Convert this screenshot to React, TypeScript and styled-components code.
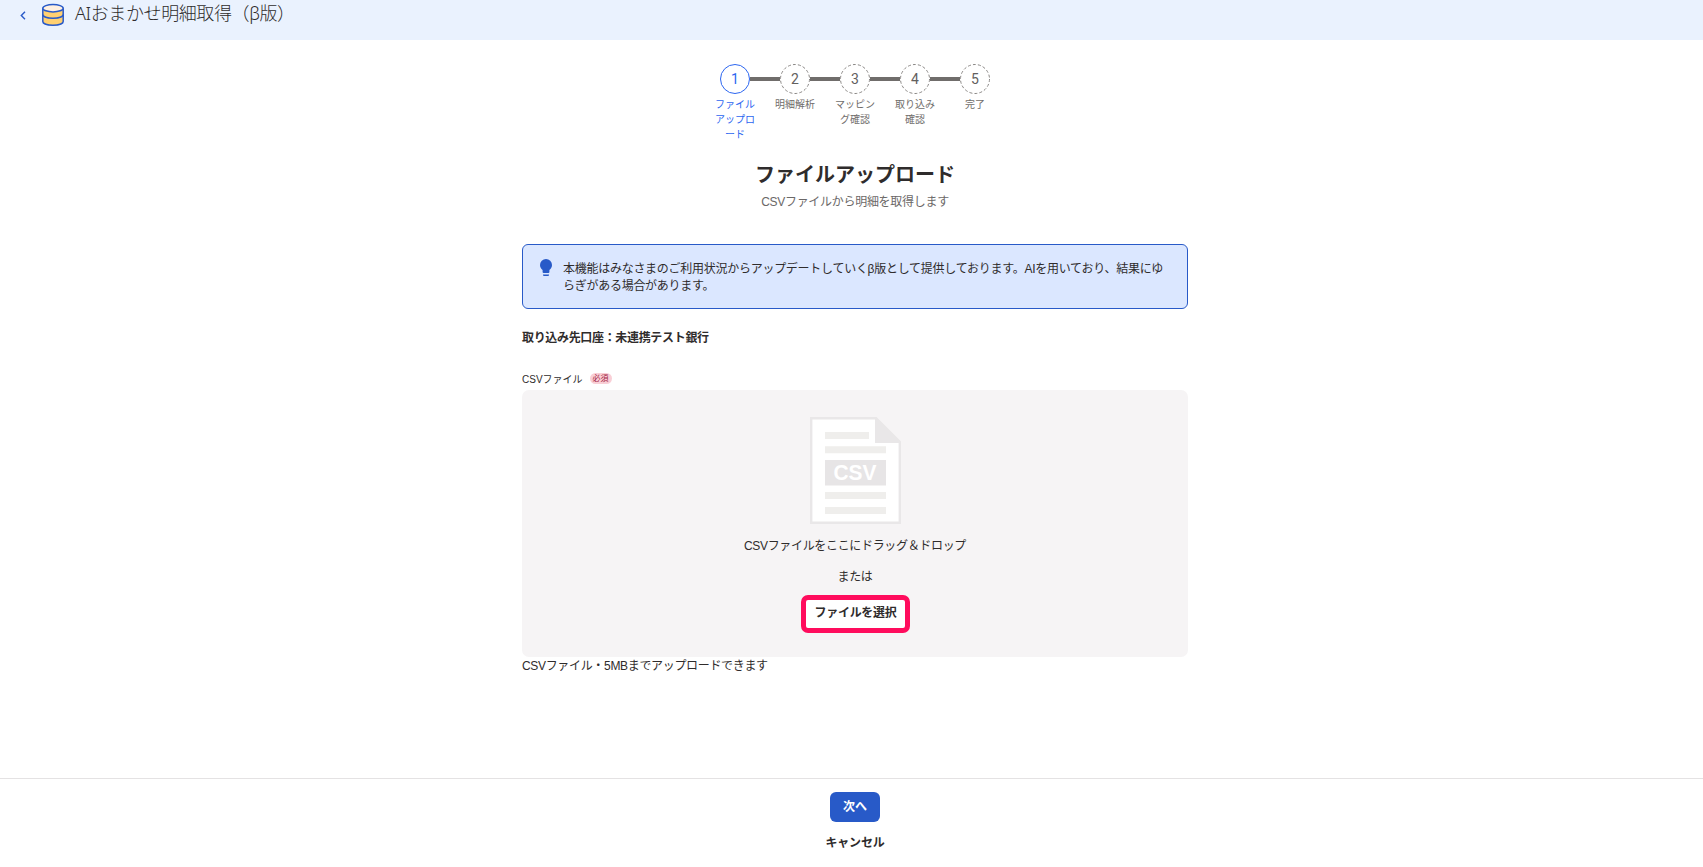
import React from "react";
import styled, { createGlobalStyle } from "styled-components";

const GlobalStyle = createGlobalStyle`
  * { box-sizing: border-box; }
  body {
    margin: 0;
    background: #fff;
    color: #2f2c2c;
    font-family: "Liberation Sans", "Noto Sans CJK JP", sans-serif;
    font-size: 12px;
  }
  h1, h2, p { margin: 0; }
  button { font-family: inherit; cursor: pointer; }
`;

const Page = styled.div`
  display: flex;
  flex-direction: column;
  height: 867px;
  overflow: hidden;
`;

const Header = styled.header`
  display: flex;
  align-items: flex-start;
  height: 40px;
  padding-left: 20px;
  background: #eaf2fe;
`;

const BackLink = styled.a`
  display: flex;
  width: 21px;
  padding-top: 11px;
`;

const Title = styled.h1`
  margin-left: 10px;
  font-family: "Noto Sans", "Noto Sans CJK JP", sans-serif;
  font-size: 18px;
  line-height: 26px;
  font-weight: 300;
  letter-spacing: -0.4px;
`;

const LogoWrap = styled.div`
  display: flex;
  padding-top: 3px;
`;

const Main = styled.main`
  display: flex;
  flex-direction: column;
  align-items: center;
  height: 738px;
  padding: 24px 0 0 7px;
`;

const Steps = styled.ol`
  display: flex;
  height: 79px;
  margin: 0;
  padding: 0;
  list-style: none;
`;

const Step = styled.li`
  display: flex;
  flex-direction: column;
  align-items: center;
  width: 60px;
`;

const StepTrack = styled.div`
  display: flex;
  align-items: center;
  width: 100%;
`;

const Line = styled.span<{ $hidden?: boolean }>`
  flex: 1;
  height: 4px;
  background: ${(p) => (p.$hidden ? "transparent" : "#706d6b")};
`;

const StepLabel = styled.span<{ $active?: boolean }>`
  width: 40px;
  margin-top: 3px;
  text-align: center;
  word-break: break-all;
  line-break: anywhere;
  font-size: 10px;
  line-height: 15px;
  color: ${(p) => (p.$active ? "#2c66f0" : "#706d6b")};
`;

const StepNumber = styled.text`
  font-family: Roboto, sans-serif;
  font-size: 14px;
  text-anchor: middle;
`;

const Heading = styled.h2`
  margin-top: 17px;
  font-size: 20px;
  line-height: 30px;
  font-weight: 700;
`;

const Lead = styled.p`
  margin-top: 3px;
  line-height: 18px;
  letter-spacing: -0.29px;
  color: #6b6867;
`;

const Content = styled.div`
  display: flex;
  flex-direction: column;
  width: 666px;
  margin-top: 33px;
  letter-spacing: -0.33px;
`;

const Notice = styled.div`
  display: flex;
  height: 65px;
  padding: 14px 16px;
  border: 1px solid #285ac8;
  border-radius: 6px;
  background: #dbe7ff;
`;

const NoticeText = styled.p`
  flex: 1;
  margin-left: 10px;
  padding-top: 2px;
  line-height: 17px;
  letter-spacing: -0.27px;
  word-break: break-all;
`;

const Account = styled.p`
  margin-top: 20px;
  line-height: 18px;
  font-weight: 700;
`;

const FieldLabel = styled.div`
  display: flex;
  align-items: center;
  height: 16px;
  margin-top: 23px;
  font-size: 10px;
  letter-spacing: 0;
`;

const Required = styled.span`
  height: 11px;
  margin: 0 0 0 7px;
  padding: 0 3px;
  border-radius: 6px;
  background: #f9cfd6;
  color: #a42645;
  font-size: 8px;
  line-height: 11px;
`;

const DropZone = styled.div`
  display: flex;
  flex-direction: column;
  align-items: center;
  height: 267px;
  margin-top: 4px;
  padding-top: 27px;
  border-radius: 7px;
  background: #f6f4f5;
`;

const DropText = styled.p<{ $gap: number }>`
  margin-top: ${(p) => p.$gap}px;
  line-height: 18px;
`;

const FileButton = styled.button`
  width: 109px;
  height: 38px;
  margin: 9px 0 0 1px;
  padding: 0 0 5px;
  border: 5px solid #ff0c5d;
  border-radius: 7px;
  background: #fff;
  color: #2f2c2c;
  font-size: 12px;
  font-weight: 700;
  letter-spacing: -0.3px;
  white-space: nowrap;
`;

const Hint = styled.p`
  line-height: 18px;
`;

const Footer = styled.footer`
  display: flex;
  flex-direction: column;
  align-items: center;
  height: 89px;
  padding: 13px 0 0 7px;
  border-top: 1px solid #e4e2e3;
`;

const NextButton = styled.button`
  width: 50px;
  height: 30px;
  padding: 0 0 3px;
  border: 0;
  border-radius: 6px;
  background: #285ac8;
  color: #fff;
  font-size: 12px;
  font-weight: 700;
`;

const CancelButton = styled.button`
  margin-top: 11px;
  padding: 0;
  border: 0;
  background: none;
  color: #2f2c2c;
  font-size: 12px;
  line-height: 20px;
  font-weight: 700;
  letter-spacing: -0.2px;
`;

const steps = ["ファイルアップロード", "明細解析", "マッピング確認", "取り込み確認", "完了"];

function StepCircle({ n, active }: { n: number; active: boolean }) {
  return (
    <svg width="30" height="30" viewBox="0 0 30 30">
      <circle
        cx="15"
        cy="15"
        r="14.5"
        fill="#fff"
        stroke={active ? "#2c66f0" : "#8b8886"}
        strokeDasharray={active ? undefined : "3 2.06"}
      />
      <StepNumber x="15" y="20" fill={active ? "#2c66f0" : "#62605e"}>{n}</StepNumber>
    </svg>
  );
}

function DatabaseIcon() {
  return (
    <svg width="24" height="24" viewBox="0 0 24 24" stroke="#285ac8" strokeWidth="1.5">
      <path d="M1.800 5v13.500c0 2.200 4.600 3.700 10.200 3.700s10.200-1.500 10.200-3.700V5" fill="#ffd071" />
      <ellipse cx="12" cy="5.200" rx="10.200" ry="3.700" fill="#fff0e0" />
      <path d="M1.800 11.500c0 2.200 4.600 3.700 10.200 3.700s10.200-1.500 10.200-3.700" fill="none" />
    </svg>
  );
}

function BulbIcon() {
  return (
    <svg width="14" height="18" viewBox="0 0 14 18" fill="#285ac8">
      <path d="M7 0a6 6 0 0 0-6 6c0 2.300 1 3.700 2.600 4.900V13q0 1 1 1h4.800q1 0 1-1v-2.100C12 9.700 13 8.300 13 6a6 6 0 0 0-6-6z" />
      <path d="M4 15.500h6v.6q0 1-1 1H5q-1 0-1-1z" />
    </svg>
  );
}

const CsvText = styled.text`
  font-family: "Liberation Sans", sans-serif;
  font-size: 22px;
  font-weight: 700;
  letter-spacing: 0;
`;

function CsvFile() {
  return (
    <svg width="91" height="107" viewBox="0 0 91 107">
      <path d="M1.200 1.200H66L89.800 25v80.800H1.200z" fill="#fff" stroke="#e9e7e8" strokeWidth="2.400" />
      <path d="M65 0h1l25 25v1H65z" fill="#e9e7e8" />
      <path d="M15 15h44v7H15zM15 29.200h61v7H15zM15 75h61v7H15zM15 90h61v7H15z" fill="#efeeec" />
      <path d="M15 43h61v25.500H15z" fill="#e7e5e6" />
      <CsvText x="23.500" y="63" textLength="43" lengthAdjust="spacingAndGlyphs" fill="#fff">CSV</CsvText>
    </svg>
  );
}

export default function App() {
  return (
    <Page>
      <GlobalStyle />
      <Header>
        <BackLink aria-label="戻る">
          <svg width="6" height="9" viewBox="0 0 6 9" fill="none" stroke="#285ac8" strokeWidth="1.400">
            <path d="M5 .8 1.300 4.500 5 8.200" />
          </svg>
        </BackLink>
        <LogoWrap><DatabaseIcon /></LogoWrap>
        <Title>AIおまかせ明細取得（β版）</Title>
      </Header>
      <Main>
        <Steps>
          {steps.map((label, i) => (
            <Step key={label}>
              <StepTrack>
                <Line $hidden={i === 0} />
                <StepCircle n={i + 1} active={i === 0} />
                <Line $hidden={i === steps.length - 1} />
              </StepTrack>
              <StepLabel $active={i === 0}>{label}</StepLabel>
            </Step>
          ))}
        </Steps>
        <Heading>ファイルアップロード</Heading>
        <Lead>CSVファイルから明細を取得します</Lead>
        <Content>
          <Notice>
            <BulbIcon />
            <NoticeText>
              本機能はみなさまのご利用状況からアップデートしていくβ版として提供しております。AIを用いており、結果にゆらぎがある場合があります。
            </NoticeText>
          </Notice>
          <Account>取り込み先口座：未連携テスト銀行</Account>
          <FieldLabel>
            CSVファイル<Required>必須</Required>
          </FieldLabel>
          <DropZone>
            <CsvFile />
            <DropText $gap={13}>CSVファイルをここにドラッグ＆ドロップ</DropText>
            <DropText $gap={13}>または</DropText>
            <FileButton>ファイルを選択</FileButton>
          </DropZone>
          <Hint>CSVファイル・5MBまでアップロードできます</Hint>
        </Content>
      </Main>
      <Footer>
        <NextButton>次へ</NextButton>
        <CancelButton>キャンセル</CancelButton>
      </Footer>
    </Page>
  );
}
